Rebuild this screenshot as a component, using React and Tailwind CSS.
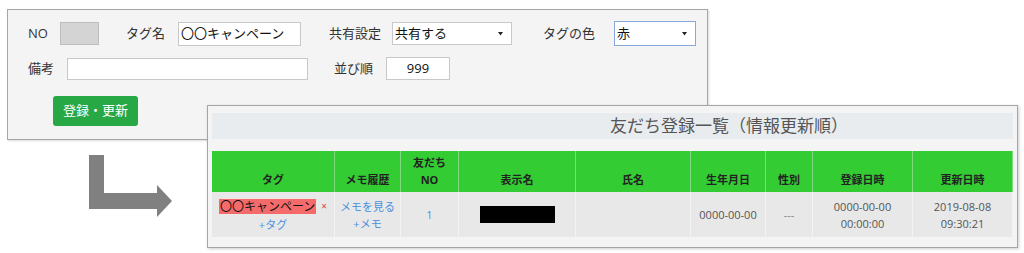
import React from "react";

const font = { fontFamily: '"Open Sans", "Noto Sans CJK JP", sans-serif' };

function Caret() {
  return (
    <svg width="5" height="5" viewBox="0 0 5 5" className="shrink-0">
      <path d="M0 1 L5 1 L2.5 4.5 Z" fill="#222" />
    </svg>
  );
}

function Arrow() {
  return (
    <svg width="84" height="64" viewBox="0 0 84 64">
      <path d="M0 0 H15 V38 H68 V30 L83 46 L68 62 V54 H0 Z" fill="#808080" />
    </svg>
  );
}

const cols = "grid grid-cols-[123px_66px_58px_117px_115px_75px_47px_100px_100px]";

const headers = [
  ["タグ"],
  ["メモ履歴"],
  ["友だち", "NO"],
  ["表示名"],
  ["氏名"],
  ["生年月日"],
  ["性別"],
  ["登録日時"],
  ["更新日時"],
];

export default function App() {
  return (
    <div className="relative w-[1024px] h-[253px] bg-white overflow-hidden" style={font}>
      {/* top form window */}
      <div className="absolute left-[7px] top-[9px] w-[701px] h-[131px] border border-[#a6a6a6] bg-[#f4f4f4] shadow-[1px_1px_2px_rgba(0,0,0,0.15)]">
        <div className="pl-[20px] pt-[11px] flex flex-col text-[13px] text-[#333]">
          <div className="flex items-center h-[25px]">
            <span className="w-[32px]">NO</span>
            <div className="w-[39px] h-[23px] bg-[#d4d4d4] border border-[#bdbdbd]" />
            <span className="ml-[27px] w-[52px]">タグ名</span>
            <div className="w-[123px] h-[24px] bg-white border border-[#c8c8c8] flex items-center px-[2px] text-[13px] text-[#111]">
              〇〇キャンペーン
            </div>
            <span className="ml-[28px] w-[63px]">共有設定</span>
            <div className="w-[120px] h-[23px] bg-white border border-[#c8c8c8] flex items-center justify-between pl-[2px] pr-[8px] text-[13px] text-[#111]">
              <span>共有する</span>
              <Caret />
            </div>
            <span className="ml-[31px] w-[71px]">タグの色</span>
            <div className="w-[82px] h-[25px] bg-white border border-[#86a8dc] flex items-center justify-between pl-[2px] pr-[8px] text-[13px] text-[#111]">
              <span>赤</span>
              <Caret />
            </div>
          </div>
          <div className="flex items-center h-[23px] mt-[11px]">
            <span className="w-[39px]">備考</span>
            <div className="w-[241px] h-[22px] bg-white border border-[#c8c8c8]" />
            <span className="ml-[26px] w-[52px]">並び順</span>
            <div className="w-[64px] h-[23px] bg-white border border-[#c8c8c8] flex items-center justify-center text-[13px] text-[#111]">
              999
            </div>
          </div>
          <div className="mt-[16px] ml-[25px]">
            <button className="w-[85px] h-[30px] rounded-[3px] bg-[#28a745] text-white text-[13px] flex items-center justify-center">
              登録・更新
            </button>
          </div>
        </div>
      </div>

      {/* arrow */}
      <div className="absolute left-[89px] top-[155px]">
        <Arrow />
      </div>

      {/* list window */}
      <div className="absolute left-[207px] top-[105px] w-[811px] h-[143px] border border-[#a6a6a6] bg-[#f4f4f4] shadow-[1px_1px_3px_rgba(0,0,0,0.2)]">
        <div className="pl-[4px] pt-[7px]">
          <div className="w-[801px] h-[26px] bg-[#e8ecef] flex items-center pl-[398px] text-[17px] text-[#555]">
            友だち登録一覧（情報更新順）
          </div>
          <div className={`${cols} mt-[12px] w-[801px]`}>
            {headers.map((h, i) => (
              <div
                key={i}
                className="h-[41px] bg-[#33cc33] border-r border-[#7ed87e] flex flex-col justify-end items-center pb-[4px] text-[11px] font-bold leading-[17px] text-[#222]"
              >
                {h.map((t) => (
                  <span key={t}>{t}</span>
                ))}
              </div>
            ))}
          </div>
          <div className={`${cols} w-[801px] text-[11px] text-[#555] leading-[17px]`}>
            <div className="h-[45px] bg-[#e8e8e8] border-r border-[#f3f3f3] flex flex-col items-center justify-center pt-[1px]">
              <div className="flex items-center">
                <span className="bg-[#f56b6b] text-[#111] text-[12px] leading-[15px] px-[1px]">〇〇キャンペーン</span>
                <span className="ml-[5px] text-[#e53935] text-[10px]">×</span>
              </div>
              <span className="text-[#4a8fe0] mt-[1px]">+タグ</span>
            </div>
            <div className="h-[45px] bg-[#e8e8e8] border-r border-[#f3f3f3] flex flex-col items-center justify-center text-[#4a8fe0]">
              <span>メモを見る</span>
              <span>+メモ</span>
            </div>
            <div className="h-[45px] bg-[#e8e8e8] border-r border-[#f3f3f3] flex items-center justify-center text-[#4a8fe0]">
              1
            </div>
            <div className="h-[45px] bg-[#e8e8e8] border-r border-[#f3f3f3] flex items-center justify-center">
              <div className="w-[75px] h-[17px] bg-black" />
            </div>
            <div className="h-[45px] bg-[#e8e8e8] border-r border-[#f3f3f3]" />
            <div className="h-[45px] bg-[#e8e8e8] border-r border-[#f3f3f3] flex items-center justify-center">
              0000-00-00
            </div>
            <div className="h-[45px] bg-[#e8e8e8] border-r border-[#f3f3f3] flex items-center justify-center text-[#888]">
              ---
            </div>
            <div className="h-[45px] bg-[#e8e8e8] border-r border-[#f3f3f3] flex flex-col items-center justify-center">
              <span>0000-00-00</span>
              <span>00:00:00</span>
            </div>
            <div className="h-[45px] bg-[#e8e8e8] border-r border-[#f3f3f3] flex flex-col items-center justify-center">
              <span>2019-08-08</span>
              <span>09:30:21</span>
            </div>
          </div>
        </div>
      </div>
    </div>
  );
}
